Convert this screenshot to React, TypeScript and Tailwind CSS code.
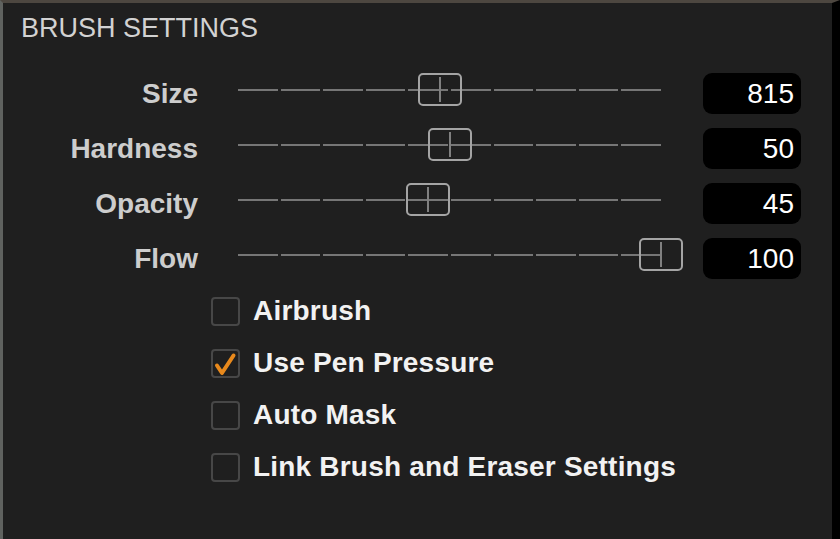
const sliders = [
  { label: "Size", value: "815", pos: 0.478 },
  { label: "Hardness", value: "50", pos: 0.5 },
  { label: "Opacity", value: "45", pos: 0.45 },
  { label: "Flow", value: "100", pos: 1 },
];

const options = [
  { label: "Airbrush", checked: false },
  { label: "Use Pen Pressure", checked: true },
  { label: "Auto Mask", checked: false },
  { label: "Link Brush and Eraser Settings", checked: false },
];

const TRACK_W = 423;

const Slider = ({ pos }: { pos: number }) => (
  <div className="relative h-full w-[423px] flex items-center">
    {/* dashed track */}
    <div className="flex w-full gap-[3px] -translate-y-1">
      {Array.from({ length: 10 }).map((_, i) => (
        <div key={i} className="h-[2px] flex-1 bg-[#767676]" />
      ))}
    </div>
    {/* thumb */}
    <div
      className="absolute top-[7px] h-[33px] w-[44px] rounded-[5px] border-2 border-[#a4a4a4] flex items-center justify-center"
      style={{ left: pos * TRACK_W - 22 }}
    >
      <div className="h-[25px] w-[2px] bg-[#808080]" />
    </div>
  </div>
);

const Checkbox = ({ checked }: { checked: boolean }) => (
  <div className="relative h-[29px] w-[29px] rounded-[4px] border-2 border-[#474747]">
    {checked && (
      <svg className="absolute -left-[2px] -top-[2px]" width="29" height="29" viewBox="0 0 29 29">
        <path
          d="M6 16.5 L11 24 L22.5 6.5"
          fill="none"
          stroke="#e8891c"
          strokeWidth="4"
          strokeLinecap="round"
          strokeLinejoin="round"
        />
      </svg>
    )}
  </div>
);

export default function App() {
  return (
    <div className="h-[539px] w-[840px] overflow-hidden border-l-[3px] border-t-[3px] border-r-[8px] border-l-[#5f625f] border-t-[#4d4740] border-r-black bg-[#1f1f1f] font-['Liberation_Sans',Arial,sans-serif]">
      {/* Header */}
      <div className="pl-[18px] pt-[12px] text-[27px] leading-[27px] text-[#d2d2d2]">BRUSH SETTINGS</div>

      {/* Sliders */}
      <div className="mt-[24px] flex flex-col">
        {sliders.map((s) => (
          <div key={s.label} className="flex h-[55px] items-center">
            <div className="w-[195px] text-right text-[28px] font-bold leading-none text-[#cdcdcd]">{s.label}</div>
            <div className="ml-[40px] h-full">
              <Slider pos={s.pos} />
            </div>
            <div className="ml-[42px] flex h-[41px] w-[98px] items-center justify-end rounded-[9px] bg-black pr-[7px] text-[28px] leading-none text-white">
              {s.value}
            </div>
          </div>
        ))}
      </div>

      {/* Options */}
      <div className="-mt-[1px] flex flex-col pl-[208px]">
        {options.map((o) => (
          <div key={o.label} className="flex h-[52px] items-center gap-[13px]">
            <Checkbox checked={o.checked} />
            <span className="text-[28px] font-bold leading-none tracking-[0.2px] text-[#f2f2f2]">{o.label}</span>
          </div>
        ))}
      </div>
    </div>
  );
}
